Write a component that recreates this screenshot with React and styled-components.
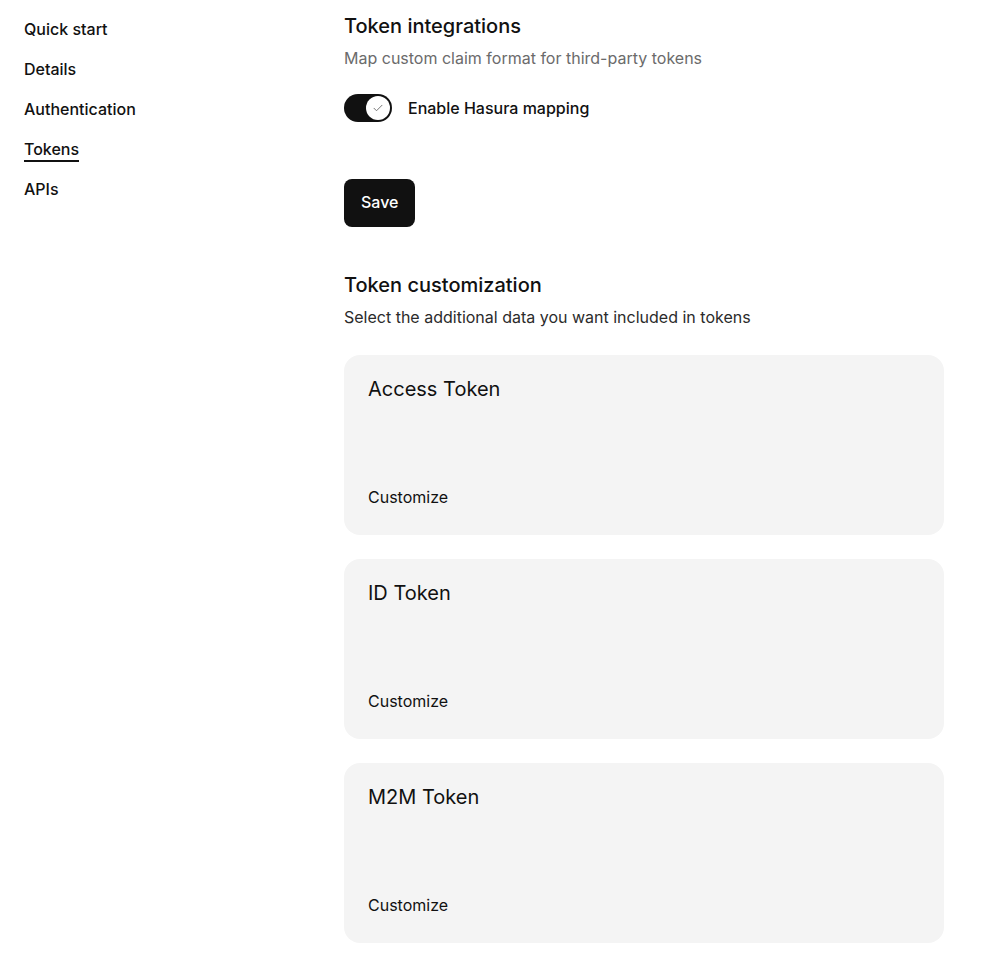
import React, { useState } from "react";
import styled, { createGlobalStyle } from "styled-components";

const GlobalStyle = createGlobalStyle`
  * { box-sizing: border-box; }
  body {
    margin: 0;
    background: #fff;
    color: #111;
    font-family: Inter, "Noto Sans", sans-serif;
    -webkit-font-smoothing: antialiased;
  }
`;

const navItems = ["Quick start", "Details", "Authentication", "Tokens", "APIs"];
const tokens = ["Access Token", "ID Token", "M2M Token"];

function App() {
  const [hasura, setHasura] = useState(true);

  return (
    <>
      <GlobalStyle />
      <StyledPage>
        <StyledNav>
          {navItems.map(item => (
            <StyledNavItem key={item}>
              <StyledNavLink $active={item === "Tokens"}>{item}</StyledNavLink>
            </StyledNavItem>
          ))}
        </StyledNav>
        <StyledMain>
          <StyledHeading>Token integrations</StyledHeading>
          <StyledSub $muted>Map custom claim format for third-party tokens</StyledSub>
          <StyledToggleRow>
            <StyledSwitch
              type="button"
              $on={hasura}
              onClick={() => setHasura(!hasura)}
            >
              <StyledKnob $on={hasura}>
                {hasura && (
                  <svg width="12" height="12" viewBox="0 0 24 24" fill="none">
                    <path
                      d="M4 12.5l5 5L20 6.5"
                      stroke="#777"
                      strokeWidth="2"
                      strokeLinecap="round"
                      strokeLinejoin="round"
                    />
                  </svg>
                )}
              </StyledKnob>
            </StyledSwitch>
            <StyledLabel>Enable Hasura mapping</StyledLabel>
          </StyledToggleRow>
          <StyledSave type="button">Save</StyledSave>

          <StyledHeading $top={44}>Token customization</StyledHeading>
          <StyledSub>Select the additional data you want included in tokens</StyledSub>
          <StyledCards>
            {tokens.map(token => (
              <StyledCard key={token}>
                <StyledCardTitle>{token}</StyledCardTitle>
                <StyledCustomize>Customize</StyledCustomize>
              </StyledCard>
            ))}
          </StyledCards>
        </StyledMain>
      </StyledPage>
    </>
  );
}

const StyledPage = styled.div`
  display: grid;
  grid-template-columns: 344px 600px;
  min-height: 963px;
`;

const StyledNav = styled.nav`
  display: flex;
  flex-direction: column;
  padding: 9px 0 0 24px;
`;

const StyledNavItem = styled.div`
  height: 40px;
  display: flex;
  align-items: center;
`;

const StyledNavLink = styled.a`
  display: inline-block;
  font-size: 16px;
  font-weight: 450;
  line-height: 20px;
  color: #111;
  cursor: pointer;
  margin-top: ${p => (p.$active ? "2px" : "0")};
  padding-bottom: ${p => (p.$active ? "1px" : "0")};
  border-bottom: ${p => (p.$active ? "2px solid #111" : "none")};
`;

const StyledMain = styled.main`
  display: flex;
  flex-direction: column;
  align-items: flex-start;
  padding-top: 12px;
  padding-bottom: 20px;
`;

const StyledHeading = styled.h2`
  margin: ${p => p.$top || 0}px 0 0;
  font-size: 20px;
  line-height: 28px;
  font-weight: 450;
  color: #111;
`;

const StyledSub = styled.p`
  margin: 6px 0 0;
  font-size: 16px;
  line-height: 24px;
  color: ${p => (p.$muted ? "#6b6b6b" : "#2b2b2b")};
`;

const StyledToggleRow = styled.div`
  display: flex;
  align-items: center;
  gap: 16px;
  margin-top: 24px;
`;

const StyledSwitch = styled.button`
  width: 48px;
  height: 28px;
  padding: 2px;
  border: none;
  border-radius: 14px;
  background: ${p => (p.$on ? "#111" : "#ccc")};
  display: flex;
  justify-content: ${p => (p.$on ? "flex-end" : "flex-start")};
  align-items: center;
  cursor: pointer;
`;

const StyledKnob = styled.span`
  width: 24px;
  height: 24px;
  border-radius: 50%;
  background: #fff;
  display: flex;
  align-items: center;
  justify-content: center;
`;

const StyledLabel = styled.span`
  font-size: 16px;
  font-weight: 450;
  color: #111;
`;

const StyledSave = styled.button`
  margin-top: 57px;
  height: 48px;
  padding: 0 17px 3px;
  border: none;
  border-radius: 8px;
  background: #111;
  color: #fff;
  font-family: inherit;
  font-size: 16px;
  font-weight: 450;
  cursor: pointer;
`;

const StyledCards = styled.div`
  align-self: stretch;
  display: flex;
  flex-direction: column;
  gap: 24px;
  margin-top: 26px;
`;

const StyledCard = styled.div`
  height: 180px;
  border-radius: 16px;
  background: #f4f4f4;
  padding: 24px 24px 26px;
  display: flex;
  flex-direction: column;
  justify-content: space-between;
`;

const StyledCardTitle = styled.h3`
  margin: 0;
  font-size: 20px;
  line-height: 20px;
  font-weight: 400;
  color: #111;
`;

const StyledCustomize = styled.a`
  font-size: 16px;
  line-height: 24px;
  color: #111;
  cursor: pointer;
`;

export default App;
